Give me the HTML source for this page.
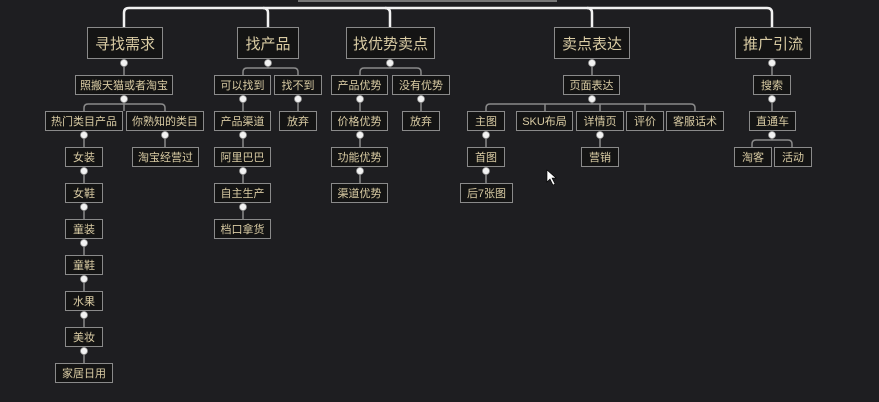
<!DOCTYPE html>
<html><head><meta charset="utf-8"><style>
body{margin:0;width:879px;height:402px;background:#1e1e21;overflow:hidden;position:relative;font-family:"Liberation Sans","Noto Sans CJK SC",sans-serif}
.n{position:absolute;box-sizing:border-box;border:1.5px solid #8a8a8a;background:#141414;color:#d9cba3;font-size:11px;display:flex;align-items:center;justify-content:center;height:20px;white-space:nowrap}
.r{height:32px;font-size:15px;top:27px}
svg{position:absolute;left:0;top:0}
</style></head><body>
<div style="position:absolute;left:298px;top:0;width:259px;height:2px;background:#777"></div>
<svg width="879" height="402">
<g fill="none" stroke="#f2f2f2" stroke-width="2.5">
<path d="M124 27V13Q124 8 129 8H767Q772 8 772 13V27"/>
<path d="M263 8Q268 8 268 13V27M385 8Q390 8 390 13V27M587 8Q592 8 592 13V27"/>
</g>
<g fill="none" stroke="#8a8a8a" stroke-width="1.5">
<path d="M124 58V75M124 94V111"/>
<path d="M84 111V108Q84 104 88 104H161Q165 104 165 108V111"/>
<path d="M84 130V363M165 130V147"/>
<path d="M268 58V68M243 75V72Q243 68 247 68H294Q298 68 298 72V75"/>
<path d="M243 94V219M298 94V111"/>
<path d="M390 58V68M360 75V72Q360 68 364 68H417Q421 68 421 72V75"/>
<path d="M360 94V183M421 94V111"/>
<path d="M592 58V75M592 94V104M486 111V108Q486 104 490 104H691Q695 104 695 108V111M545 104V111M600 104V111M645 104V111"/>
<path d="M486 130V183M600 130V147"/>
<path d="M772 58V111M772 130V140M752 147V144Q752 140 756 140H788Q792 140 792 144V147"/>
</g>
<g fill="#f2f2f2" stroke="#999" stroke-width="0.8">
<circle cx="124" cy="63" r="3.5"/><circle cx="124" cy="99" r="3.5"/>
<circle cx="84" cy="135" r="3.5"/><circle cx="84" cy="171" r="3.5"/><circle cx="84" cy="207" r="3.5"/><circle cx="84" cy="243" r="3.5"/><circle cx="84" cy="279" r="3.5"/><circle cx="84" cy="315" r="3.5"/><circle cx="84" cy="351" r="3.5"/>
<circle cx="165" cy="135" r="3.5"/>
<circle cx="268" cy="63" r="3.5"/><circle cx="243" cy="99" r="3.5"/><circle cx="243" cy="135" r="3.5"/><circle cx="243" cy="171" r="3.5"/><circle cx="243" cy="207" r="3.5"/><circle cx="298" cy="99" r="3.5"/>
<circle cx="390" cy="63" r="3.5"/><circle cx="360" cy="99" r="3.5"/><circle cx="360" cy="135" r="3.5"/><circle cx="360" cy="171" r="3.5"/><circle cx="421" cy="99" r="3.5"/>
<circle cx="592" cy="63" r="3.5"/><circle cx="592" cy="99" r="3.5"/><circle cx="486" cy="135" r="3.5"/><circle cx="486" cy="171" r="3.5"/><circle cx="600" cy="135" r="3.5"/>
<circle cx="772" cy="63" r="3.5"/><circle cx="772" cy="99" r="3.5"/><circle cx="772" cy="135" r="3.5"/>
</g>
<path d="M547 170V182L550 179L553 185L555 184L552 178L556 178Z" fill="#fff" stroke="#000" stroke-width="0.6"/>
</svg>
<div class="n r" style="left:87px;width:76px">寻找需求</div>
<div class="n r" style="left:237px;width:62px">找产品</div>
<div class="n r" style="left:346px;width:89px">找优势卖点</div>
<div class="n r" style="left:554px;width:76px">卖点表达</div>
<div class="n r" style="left:735px;width:76px">推广引流</div>

<div class="n" style="left:75px;top:75px;width:98px">照搬天猫或者淘宝</div>
<div class="n" style="left:214px;top:75px;width:57px">可以找到</div>
<div class="n" style="left:274px;top:75px;width:48px">找不到</div>
<div class="n" style="left:331px;top:75px;width:57px">产品优势</div>
<div class="n" style="left:392px;top:75px;width:58px">没有优势</div>
<div class="n" style="left:563px;top:75px;width:57px">页面表达</div>
<div class="n" style="left:753px;top:75px;width:38px">搜索</div>

<div class="n" style="left:45px;top:111px;width:78px">热门类目产品</div>
<div class="n" style="left:126px;top:111px;width:78px">你熟知的类目</div>
<div class="n" style="left:214px;top:111px;width:57px">产品渠道</div>
<div class="n" style="left:279px;top:111px;width:38px">放弃</div>
<div class="n" style="left:331px;top:111px;width:57px">价格优势</div>
<div class="n" style="left:402px;top:111px;width:38px">放弃</div>
<div class="n" style="left:467px;top:111px;width:38px">主图</div>
<div class="n" style="left:516px;top:111px;width:57px">SKU布局</div>
<div class="n" style="left:576px;top:111px;width:48px">详情页</div>
<div class="n" style="left:626px;top:111px;width:38px">评价</div>
<div class="n" style="left:666px;top:111px;width:58px">客服话术</div>
<div class="n" style="left:749px;top:111px;width:47px">直通车</div>

<div class="n" style="left:65px;top:147px;width:38px">女装</div>
<div class="n" style="left:132px;top:147px;width:67px">淘宝经营过</div>
<div class="n" style="left:214px;top:147px;width:57px">阿里巴巴</div>
<div class="n" style="left:331px;top:147px;width:57px">功能优势</div>
<div class="n" style="left:467px;top:147px;width:38px">首图</div>
<div class="n" style="left:581px;top:147px;width:38px">营销</div>
<div class="n" style="left:734px;top:147px;width:38px">淘客</div>
<div class="n" style="left:774px;top:147px;width:38px">活动</div>

<div class="n" style="left:65px;top:183px;width:38px">女鞋</div>
<div class="n" style="left:214px;top:183px;width:57px">自主生产</div>
<div class="n" style="left:331px;top:183px;width:57px">渠道优势</div>
<div class="n" style="left:460px;top:183px;width:53px">后7张图</div>

<div class="n" style="left:65px;top:219px;width:38px">童装</div>
<div class="n" style="left:214px;top:219px;width:57px">档口拿货</div>
<div class="n" style="left:65px;top:255px;width:38px">童鞋</div>
<div class="n" style="left:65px;top:291px;width:38px">水果</div>
<div class="n" style="left:65px;top:327px;width:38px">美妆</div>
<div class="n" style="left:55px;top:363px;width:58px">家居日用</div>
</body></html>
